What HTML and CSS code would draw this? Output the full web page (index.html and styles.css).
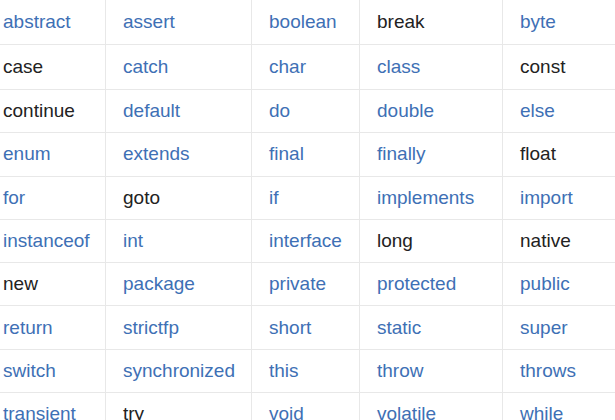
FILE: index.html
```html
<!DOCTYPE html>
<html>
<head>
<meta charset="utf-8">
<link rel="stylesheet" href="styles.css">
</head>
<body>
<div class="keywords">
  <div class="cell kw">abstract</div><div class="cell kw">assert</div><div class="cell kw">boolean</div><div class="cell plain">break</div><div class="cell kw">byte</div>
  <div class="cell plain">case</div><div class="cell kw">catch</div><div class="cell kw">char</div><div class="cell kw">class</div><div class="cell plain">const</div>
  <div class="cell plain">continue</div><div class="cell kw">default</div><div class="cell kw">do</div><div class="cell kw">double</div><div class="cell kw">else</div>
  <div class="cell kw">enum</div><div class="cell kw">extends</div><div class="cell kw">final</div><div class="cell kw">finally</div><div class="cell plain">float</div>
  <div class="cell kw">for</div><div class="cell plain">goto</div><div class="cell kw">if</div><div class="cell kw">implements</div><div class="cell kw">import</div>
  <div class="cell kw">instanceof</div><div class="cell kw">int</div><div class="cell kw">interface</div><div class="cell plain">long</div><div class="cell plain">native</div>
  <div class="cell plain">new</div><div class="cell kw">package</div><div class="cell kw">private</div><div class="cell kw">protected</div><div class="cell kw">public</div>
  <div class="cell kw">return</div><div class="cell kw">strictfp</div><div class="cell kw">short</div><div class="cell kw">static</div><div class="cell kw">super</div>
  <div class="cell kw">switch</div><div class="cell kw">synchronized</div><div class="cell kw">this</div><div class="cell kw">throw</div><div class="cell kw">throws</div>
  <div class="cell kw">transient</div><div class="cell plain">try</div><div class="cell kw">void</div><div class="cell kw">volatile</div><div class="cell kw">while</div>
</div>
</body>
</html>
```

FILE: styles.css
```css
html, body {
  margin: 0;
  padding: 0;
  background: #ffffff;
  overflow: hidden;
  width: 615px;
  height: 420px;
}

.keywords {
  display: grid;
  grid-template-columns: 120px 146px 108px 143px 140px;
  grid-template-rows: 45px 45px repeat(8, 43.3px);
  margin-left: -14px;
  font-family: "Liberation Sans", Arial, sans-serif;
  font-size: 19px;
}

.cell {
  box-sizing: border-box;
  display: flex;
  align-items: center;
  padding-left: 17px;
  border-right: 1px solid #e8e8e8;
  border-bottom: 1px solid #e8e8e8;
  white-space: nowrap;
}

.kw {
  color: #3e70b5;
}

.plain {
  color: #222222;
}
```
